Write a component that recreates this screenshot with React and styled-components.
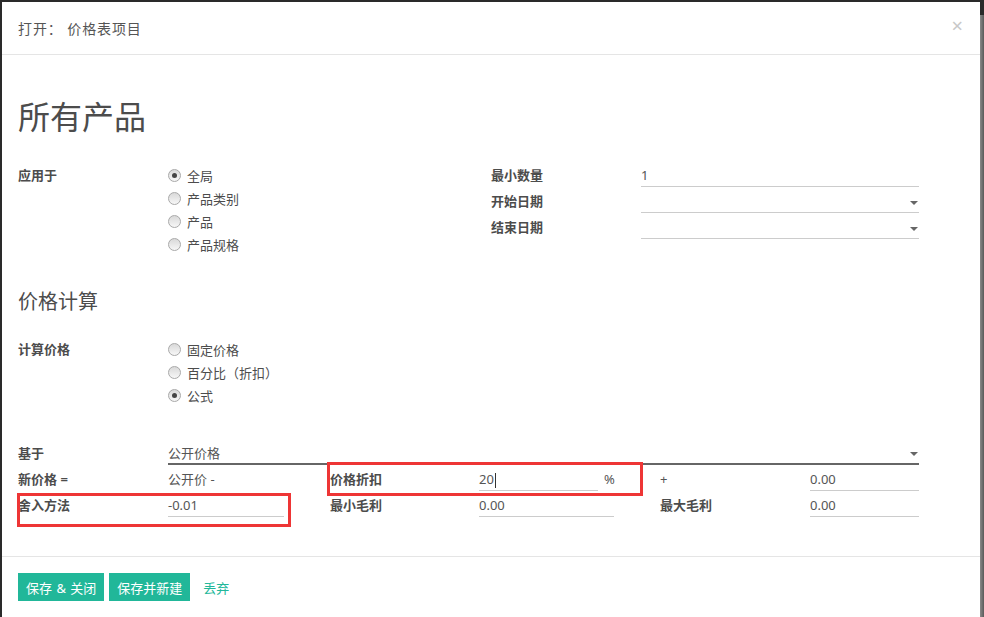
import React from "react";
import styled, { createGlobalStyle } from "styled-components";

const Global = createGlobalStyle`
  html, body { margin: 0; padding: 0; background: #2a2a2a; }
  body { font-family: "Noto Sans", "Noto Sans CJK SC", sans-serif; color: #4c4c4c; }
  * { box-sizing: border-box; }
`;

const Backdrop = styled.div`
  display: flex;
  width: 984px;
  height: 617px;
  padding: 2px 0 0 2px;
  overflow: hidden;
`;

const Modal = styled.div`
  position: relative;
  flex: none;
  width: 978px;
  height: 615px;
  background: #fff;
  display: flex;
  flex-direction: column;
`;

const ScrollStrip = styled.div`
  flex: 1;
  margin-top: 13px;
  background: linear-gradient(to right, #8a8a8a, #5a5a5a);
`;

const Header = styled.div`
  height: 53px;
  border-bottom: 1px solid #e5e5e5;
  display: flex;
  align-items: center;
  justify-content: space-between;
  padding: 0 17px 0 16px;
`;

const HeaderTitle = styled.div`
  font-size: 14px;
  color: #555;
  letter-spacing: 0.9px;
`;

const Close = styled.span`
  font-size: 20px;
  line-height: 20px;
  color: #c8c8c8;
  margin-top: -4px;
`;

const Body = styled.div`
  padding: 42px 16px 39px 16px;
`;

const PageTitle = styled.h1`
  margin: 0;
  font-size: 32px;
  line-height: 40px;
  font-weight: 400;
  color: #4c4c4c;
`;

const SectionTitle = styled.h2`
  margin: 32px 0 0;
  font-size: 20px;
  line-height: 28px;
  font-weight: 400;
  color: #4c4c4c;
`;

const TopGroup = styled.div`
  margin-top: 27px;
  display: grid;
  grid-template-columns: 473px 428px;
  align-items: start;
`;

const LabelValue = styled.div`
  display: grid;
  grid-template-columns: 150px 1fr;
  margin-top: ${(p) => p.$mt || 0}px;
`;

const Label = styled.div`
  font-size: 13px;
  font-weight: 700;
  line-height: ${(p) => p.$lh || 20}px;
  height: ${(p) => p.$lh || 22}px;
  color: #4c4c4c;
  white-space: nowrap;
`;

const RadioList = styled.div`
  display: flex;
  flex-direction: column;
`;

const RadioRow = styled.div`
  display: flex;
  align-items: center;
  height: 23px;
  gap: 6px;
  font-size: 13px;
  color: #4c4c4c;
`;

const RadioCircle = styled.span`
  width: 13px;
  height: 13px;
  border-radius: 50%;
  border: 1px solid #a9a9a9;
  background: linear-gradient(to bottom, #d9d9d9, #f7f7f7);
  display: flex;
  align-items: center;
  justify-content: center;
  &::after {
    content: "";
    width: 5px;
    height: 5px;
    border-radius: 50%;
    background: ${(p) => (p.$checked ? "#444" : "transparent")};
  }
`;

const RightGroup = styled.div`
  padding-top: 1px;
  display: grid;
  grid-template-columns: 150px 278px;
  grid-auto-rows: 22px;
  align-content: start;
  row-gap: 4px;
`;

const Field = styled.div`
  display: flex;
  align-items: center;
  justify-content: space-between;
  height: 22px;
  width: ${(p) => (p.$w ? `${p.$w}px` : "100%")};
  border-bottom: ${(p) => (p.$strong ? "2px solid #666" : "1px solid #ccc")};
  padding-bottom: 1px;
  font-size: 13px;
  color: #555;
  line-height: 20px;
`;

const Caret = styled.span`
  display: inline-block;
  width: 1px;
  height: 15px;
  background: #333;
  vertical-align: middle;
  margin-left: 1px;
`;

const Arrow = styled.span`
  width: 0;
  height: 0;
  border-left: 4px solid transparent;
  border-right: 4px solid transparent;
  border-top: 4px solid #666;
  margin-right: 1px;
  margin-top: 3px;
`;

const FormulaGrid = styled.div`
  margin-top: 36px;
  display: grid;
  grid-template-columns: 150px 162px 149px 181px 150px 109px;
  grid-auto-rows: 22px;
  row-gap: 4px;
`;

const Plain = styled.div`
  font-size: 13px;
  line-height: 20px;
  color: #555;
  grid-column: ${(p) => p.$span || "auto"};
`;

const Inline = styled.div`
  display: flex;
  align-items: flex-start;
  gap: 6px;
`;

const Footer = styled.div`
  border-top: 1px solid #e5e5e5;
  padding: 16px;
  display: flex;
  align-items: center;
  gap: 5px;
`;

const Button = styled.button`
  height: 28px;
  padding: 0 8px;
  border: none;
  background: ${(p) => (p.$link ? "transparent" : "#21b799")};
  color: ${(p) => (p.$link ? "#21b799" : "#fff")};
  font-family: inherit;
  font-size: 13px;
  word-spacing: 1px;
  cursor: pointer;
`;

const RedBox = styled.div`
  position: absolute;
  border: 3px solid #ee3535;
  left: ${(p) => p.$x}px;
  top: ${(p) => p.$y}px;
  width: ${(p) => p.$w}px;
  height: ${(p) => p.$h}px;
  pointer-events: none;
`;

const Radio = ({ checked, children }) => (
  <RadioRow>
    <RadioCircle $checked={checked} />
    <span>{children}</span>
  </RadioRow>
);

export default function App() {
  return (
    <>
      <Global />
      <Backdrop>
        <Modal>
          <Header>
            <HeaderTitle>打开： 价格表项目</HeaderTitle>
            <Close>×</Close>
          </Header>
          <Body>
            <PageTitle>所有产品</PageTitle>
            <TopGroup>
              <LabelValue>
                <Label $lh={23}>应用于</Label>
                <RadioList>
                  <Radio checked>全局</Radio>
                  <Radio>产品类别</Radio>
                  <Radio>产品</Radio>
                  <Radio>产品规格</Radio>
                </RadioList>
              </LabelValue>
              <RightGroup>
                <Label>最小数量</Label>
                <Field>1</Field>
                <Label>开始日期</Label>
                <Field>
                  <span />
                  <Arrow />
                </Field>
                <Label>结束日期</Label>
                <Field>
                  <span />
                  <Arrow />
                </Field>
              </RightGroup>
            </TopGroup>

            <SectionTitle>价格计算</SectionTitle>
            <LabelValue $mt={22}>
              <Label $lh={23}>计算价格</Label>
              <RadioList>
                <Radio>固定价格</Radio>
                <Radio>百分比（折扣）</Radio>
                <Radio checked>公式</Radio>
              </RadioList>
            </LabelValue>

            <FormulaGrid>
              <Label>基于</Label>
              <Plain $span="2 / 7">
                <Field $strong>
                  <span>公开价格</span>
                  <Arrow />
                </Field>
              </Plain>

              <Label>新价格 =</Label>
              <Plain>公开价 -</Plain>
              <Label>价格折扣</Label>
              <Inline>
                <Field $w={119}>
                  <span>
                    20
                    <Caret />
                  </span>
                </Field>
                <Plain>%</Plain>
              </Inline>
              <Plain>+</Plain>
              <Field>0.00</Field>

              <Label>舍入方法</Label>
              <Field $w={116}>-0.01</Field>
              <Label>最小毛利</Label>
              <Field $w={135}>0.00</Field>
              <Label>最大毛利</Label>
              <Field>0.00</Field>
            </FormulaGrid>
          </Body>
          <Footer>
            <Button>保存 &amp; 关闭</Button>
            <Button>保存并新建</Button>
            <Button $link>丢弃</Button>
          </Footer>
          <RedBox $x={325} $y={460} $w={316} $h={34} />
          <RedBox $x={15} $y={491} $w={274} $h={34} />
        </Modal>
        <ScrollStrip />
      </Backdrop>
    </>
  );
}
